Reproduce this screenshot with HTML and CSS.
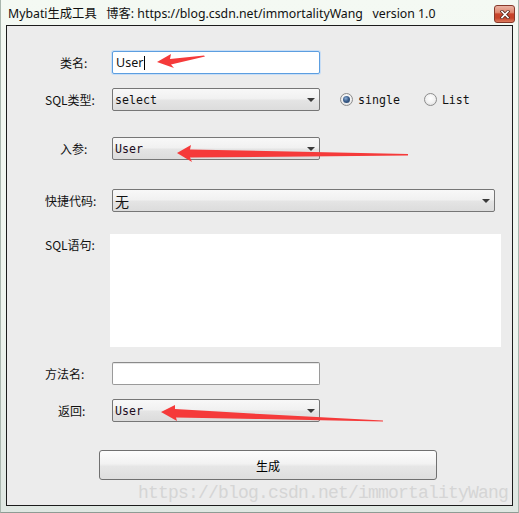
FILE: index.html
```html
<!DOCTYPE html>
<html>
<head>
<meta charset="utf-8">
<link rel="stylesheet" href="styles.css">
</head>
<body>
<div class="window">
  <div class="titlebar">
    <span class="title">Mybati生成工具   博客: https://blog.csdn.net/immortalityWang   version 1.0</span>
    <div class="close">
      <svg width="10" height="9" viewBox="0 0 10 9"><path d="M2 1.5 L8 7.5 M8 1.5 L2 7.5" stroke="#5a2a20" stroke-width="3.2" stroke-linecap="square"/><path d="M2 1.5 L8 7.5 M8 1.5 L2 7.5" stroke="#ffffff" stroke-width="1.6" stroke-linecap="square"/></svg>
    </div>
  </div>
  <div class="frame">
    <div class="client">
      <div class="row r1">
        <div class="lbl short">类名:</div>
        <div class="input focus"><span class="prop">User</span><span class="caret"></span></div>
      </div>
      <div class="row r2">
        <div class="lbl">SQL类型:</div>
        <div class="select"><span class="mono">select</span><span class="tri"></span></div>
        <div class="radios">
          <span class="radio checked"><span class="dot"></span></span><span class="mono rtext">single</span>
          <span class="radio list"></span><span class="mono rtext">List</span>
        </div>
      </div>
      <div class="row r3">
        <div class="lbl short">入参:</div>
        <div class="select"><span class="mono dark">User</span><span class="tri"></span></div>
      </div>
      <div class="row r4">
        <div class="lbl">快捷代码:</div>
        <div class="select wide"><span class="cjk">无</span><span class="tri"></span></div>
      </div>
      <div class="row r5">
        <div class="lbl top">SQL语句:</div>
        <div class="sqlarea"></div>
      </div>
      <div class="row r6">
        <div class="lbl">方法名:</div>
        <div class="input plain"></div>
      </div>
      <div class="row r7">
        <div class="lbl short2">返回:</div>
        <div class="select"><span class="mono dark">User</span><span class="tri"></span></div>
      </div>
      <div class="btnrow">
        <div class="button">生成</div>
      </div>
    </div>
  </div>
  <div class="watermark">https://blog.csdn.net/immortalityWang</div>
  <svg class="arrows" width="519" height="513" viewBox="0 0 519 513">
    <polygon fill="#f53a3a" points="157,62 171,54 170,59 204,55.5 205,56.5 171,64.5 174,68"/>
    <polygon fill="#f53a3a" points="177,153 191,145 190,149.5 408,154 408,155.5 190,157.5 192,162"/>
    <polygon fill="#f53a3a" points="161,412 175,405 175,409 260,414 383,420.5 383,421.5 260,419 176,417.5 177,421"/>
  </svg>
</div>
</body>
</html>
```

FILE: styles.css
```css
* { box-sizing: border-box; }
html, body { margin: 0; padding: 0; }
body { background: #eef4ee; width: 519px; height: 513px; overflow: hidden; }

.window {
  position: relative;
  width: 519px;
  height: 513px;
  background: linear-gradient(to bottom, #f4f9f3 0%, #eef4ee 60%, #dfe7e2 100%);
  border-left: 1px solid #a9b6ae;
  border-right: 1px solid #a9b6ae;
  border-bottom: 1px solid #8e9c94;
  display: flex;
  flex-direction: column;
}

.titlebar {
  height: 25px;
  display: flex;
  align-items: flex-start;
  padding-left: 7px;
}
.title {
  font-family: "Noto Sans", "Noto Sans CJK SC", sans-serif;
  font-size: 12.3px;
  line-height: 16px;
  margin-top: 6px;
  color: #101010;
  white-space: pre;
}
.close {
  margin-left: auto;
  margin-right: 3px;
  margin-top: 5px;
  width: 21px;
  height: 18px;
  border: 1px solid #86392b;
  border-radius: 3px;
  background: linear-gradient(to bottom, #eab2a2 0%, #e08a72 40%, #c9442c 50%, #c5432a 75%, #dd7a5e 100%);
  display: flex;
  align-items: center;
  justify-content: center;
}

.frame {
  flex: 1;
  padding: 0 5px 6px 5px;
  display: flex;
}
.client {
  flex: 1;
  position: relative;
  background: #ececec;
  border: 1px solid #1c1c1c;
  padding-top: 25px;
  display: flex;
  flex-direction: column;
}

.row { display: flex; align-items: center; height: 23px; }
.r2 { margin-top: 14px; }
.r3 { margin-top: 26px; }
.r4 { margin-top: 29px; }
.r5 { margin-top: 22px; height: 113px; align-items: flex-start; }
.r6 { margin-top: 15px; }
.r7 { margin-top: 14px; }

.lbl {
  width: 105px;
  flex: none;
  padding-left: 38px;
  font-family: "Noto Sans CJK SC", sans-serif;
  font-size: 12px;
  line-height: 16px;
  color: #111;
  white-space: nowrap;
}
.lbl.short { padding-left: 53px; }
.lbl.short2 { padding-left: 51px; }
.lbl.top { width: 103px; padding-top: 3px; }

.input {
  width: 208px;
  height: 23px;
  background: #fff;
  border-radius: 2px;
  display: flex;
  align-items: center;
  padding-left: 3px;
}
.input.focus {
  border: 1px solid #5c9ee0;
  box-shadow: 0 0 0 1px #c9def5;
}
.input.plain {
  border: 1px solid #9a9a9a;
  border-top-color: #8a8a8a;
  box-shadow: inset 0 1px 0 #e6e6e6;
}
.prop {
  font-family: "Noto Sans", sans-serif;
  font-size: 12.5px;
  color: #111;
}
.caret {
  display: inline-block;
  width: 1px;
  height: 14px;
  background: #000;
  margin-left: 1px;
}

.select {
  position: relative;
  width: 208px;
  height: 23px;
  border: 1px solid #767676;
  border-radius: 2px;
  background: linear-gradient(to bottom, #f8f8f8 0%, #f1f1f1 45%, #e4e4e4 55%, #dcdcdc 100%);
  display: flex;
  align-items: center;
  padding-left: 2px;
}
.select.wide { width: 383px; }
.tri {
  margin-left: auto;
  margin-right: 4px;
  width: 0;
  height: 0;
  border-left: 4px solid transparent;
  border-right: 4px solid transparent;
  border-top: 4px solid #3a3a3a;
}
.mono {
  font-family: "DejaVu Sans Mono", monospace;
  font-size: 11.6px;
  color: #111;
}
.mono.dark { color: #200c20; }
.cjk {
  font-family: "Noto Sans CJK SC", sans-serif;
  font-size: 14px;
  color: #111;
}

.radios {
  display: flex;
  align-items: center;
  margin-left: 20px;
}
.radio {
  width: 13px;
  height: 13px;
  border-radius: 50%;
  border: 1px solid #8c8c8c;
  background: radial-gradient(circle at 50% 40%, #ffffff 0%, #f2f2f2 50%, #d6d6d6 100%);
  display: flex;
  align-items: center;
  justify-content: center;
}
.radio.list { margin-left: 24px; }
.dot {
  width: 7px;
  height: 7px;
  border-radius: 50%;
  background: radial-gradient(circle at 40% 35%, #8fb0d8 0%, #3c5f8c 45%, #1f3a60 100%);
}
.rtext { margin-left: 5px; }

.sqlarea {
  width: 391px;
  height: 113px;
  background: #fff;
}

.btnrow { margin-top: 28px; padding-left: 92px; }
.button {
  width: 338px;
  height: 30px;
  border: 1px solid #707070;
  border-radius: 3px;
  background: linear-gradient(to bottom, #fdfdfd 0%, #f2f2f2 45%, #e6e6e6 55%, #dedede 100%);
  display: flex;
  align-items: center;
  justify-content: center;
  font-family: "Noto Sans CJK SC", sans-serif;
  font-size: 12px;
  color: #000;
}

.watermark {
  position: absolute;
  left: 137px;
  top: 484px;
  font-family: "Liberation Mono", monospace;
  font-size: 18px;
  letter-spacing: -0.8px;
  line-height: 18px;
  color: #d5d5d5;
  white-space: nowrap;
}
.arrows {
  position: absolute;
  left: -1px;
  top: 0;
  pointer-events: none;
}
```
